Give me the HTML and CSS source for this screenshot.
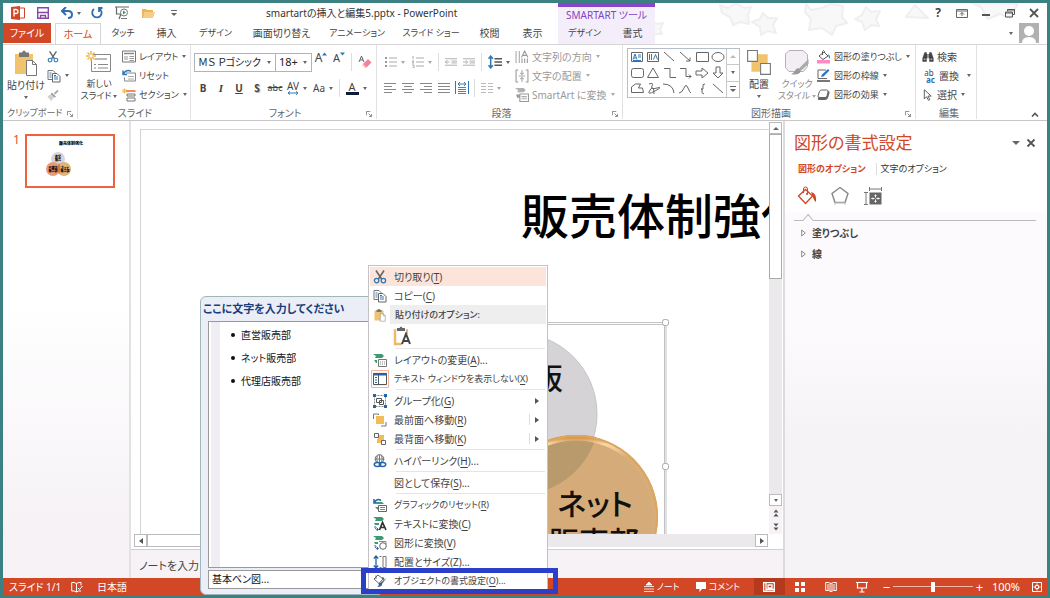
FILE: index.html
```html
<!DOCTYPE html>
<html lang="ja">
<head>
<meta charset="utf-8">
<title>smartartの挿入と編集5.pptx - PowerPoint</title>
<link rel="stylesheet" href="styles.css">
</head>
<body>
<svg class="defs" aria-hidden="true">
  <symbol id="cut" viewBox="0 0 14 14"><path d="M3 0.5 8.6 9M11 0.5 5.4 9" stroke="#666" stroke-width="1.6" fill="none"/><circle cx="3.6" cy="10.6" r="2.2" fill="none" stroke="#2f78b8" stroke-width="1.3"/><circle cx="10.4" cy="10.6" r="2.2" fill="none" stroke="#2f78b8" stroke-width="1.3"/></symbol>
  <symbol id="copy" viewBox="0 0 14 14"><path d="M1 1.5h5l2 2v7H1z" fill="#fff" stroke="#777"/><path d="M5.500 4.500h4.500l3 3v5.500H5.500z" fill="#fff" stroke="#666"/><path d="M2.500 4h2M2.500 6h2M2.500 8h2M7 8h4M7 10h4M7 6.500h2" stroke="#2f78b8"/></symbol>
  <symbol id="paste" viewBox="0 0 24 28"><path d="M1 5h18v20H1z" fill="#f0c36d"/><path d="M5 3.500h3q2-4 4 0h3V8H5z" fill="#777"/><path d="M12.500 11.500h6l4 4v11h-10z" fill="#fff" stroke="#777"/><path d="M18.500 11.500v4h4" fill="none" stroke="#777"/></symbol>
  <symbol id="brush" viewBox="0 0 14 14"><path d="m8 5 4-4 1.500 1.500-4 4z" fill="#aaa"/><path d="m5.500 4 5 5-2 1-4-4z" fill="#999"/><path d="m4 6 4 4-3 4-4.500-5z" fill="#d0d0d0"/></symbol>
  <symbol id="newslide" viewBox="0 0 26 22"><path d="M5.500 3.500h19v17h-19z" fill="#fff" stroke="#888"/><path d="M9 8h12" stroke="#bbb" stroke-width="2"/><path d="M8 13.500h2M12 13.500h10M8 17h2M12 17h10" stroke="#888"/><path d="M5 0v10M0 5h10M1.500 1.500l7 7M8.500 1.500l-7 7" stroke="#efb84c" stroke-width="1.500"/><circle cx="5" cy="5" r="1.700" fill="#fff"/></symbol>
  <symbol id="layout" viewBox="0 0 14 13"><path d="M.5.5h13v11H.5z" fill="#fff" stroke="#777"/><path d="M2 3h10" stroke="#888" stroke-width="1.500"/><path d="M2 5.500h4v4H2z" fill="#ccc"/><path d="M7.500 6H12M7.500 8H12M7.500 10H12" stroke="#999"/></symbol>
  <symbol id="reset" viewBox="0 0 14 13"><path d="M4 3.500h9.500v8H2.500V8" fill="#fff" stroke="#888"/><path d="M6 7h6M6 9.500h6" stroke="#aaa"/><path d="M1 1v4h4M1.500 4.500C3 1 6.500 0 9 2" fill="none" stroke="#2f78b8" stroke-width="1.500"/></symbol>
  <symbol id="section" viewBox="0 0 14 13"><path d="M4 2.500h9.500" stroke="#e8703a" stroke-width="1.600"/><path d="M5 5.500h8v2H5zM5 9.500h8v3H5z" fill="#fff" stroke="#777"/><path d="M2.500 0v5M0 2.500h5M.7.700l3.600 3.600M4.300.7.700 4.300" stroke="#efb84c"/></symbol>
  <symbol id="bullets" viewBox="0 0 12 12"><path d="M4 2h8M4 6h8M4 10h8" stroke="#aaa"/><path d="M0 2h2M0 6h2M0 10h2" stroke="#999" stroke-width="2"/></symbol>
  <symbol id="numbers" viewBox="0 0 12 12"><path d="M4 2h8M4 6h8M4 10h8" stroke="#aaa"/><path d="M1 0v3M0 5h2l-2 2h2M0 9h2v3H0" stroke="#aaa" fill="none"/></symbol>
  <symbol id="outdent" viewBox="0 0 13 10"><path d="M0 1.500h13M7 4h6M7 6h6M0 8.500h13M0 5h5M2.500 3 .5 5l2 2" stroke="#aaa" fill="none"/></symbol>
  <symbol id="indent" viewBox="0 0 13 10"><path d="M0 1.500h13M7 4h6M7 6h6M0 8.500h13M0 5h5M3 3l2 2-2 2" stroke="#aaa" fill="none"/></symbol>
  <symbol id="spacing" viewBox="0 0 13 13"><path d="M2.500 1v11M.5 3.500l2-2.500 2 2.500M.5 9.500l2 2.500 2-2.500" fill="none" stroke="#2f78b8" stroke-width="1.400"/><path d="M6 3.500h7M6 6.500h7M6 9.500h7" stroke="#555" stroke-width="1.200"/></symbol>
  <symbol id="al" viewBox="0 0 12 10"><path d="M0 .5h12M0 3.500h8M0 6.500h12M0 9.500h8" stroke="#888"/></symbol>
  <symbol id="ac" viewBox="0 0 12 10"><path d="M0 .5h12M2 3.500h8M0 6.500h12M2 9.500h8" stroke="#888"/></symbol>
  <symbol id="ar" viewBox="0 0 12 10"><path d="M0 .5h12M4 3.500h8M0 6.500h12M4 9.500h8" stroke="#888"/></symbol>
  <symbol id="aj" viewBox="0 0 12 10"><path d="M0 .5h12M0 3.500h12M0 6.500h12M0 9.500h12" stroke="#888"/></symbol>
  <symbol id="ad" viewBox="0 0 14 14"><path d="M.5 0v13M13.500 0v13" stroke="#2f78b8"/><path d="M3 6.500h8M3 8.500h8M3 10.500h8M3 12.500h8" stroke="#777"/><path d="M3 3h8M5 1 3 3l2 2M9 1l2 2-2 2" fill="none" stroke="#2f78b8"/></symbol>
  <symbol id="cols" viewBox="0 0 12 10"><path d="M0 .5h5M0 3.500h5M0 6.500h5M0 9.500h5M7 .5h5M7 3.500h5M7 6.500h5M7 9.500h5" stroke="#bbb"/></symbol>
  <symbol id="dir" viewBox="0 0 13 13"><path d="M1 1v11M4 1v11" stroke="#aaa"/><path d="M6 7 9 1l3 6M7 5h4M9 8v4M6.500 8v4M11.500 8v4" fill="none" stroke="#999"/></symbol>
  <symbol id="valign" viewBox="0 0 13 13"><path d="M3 1H1v11h2M10 1h2v11h-2" fill="none" stroke="#999"/><path d="M6.500 1v4M6.500 8v4M5 3.500 6.500 5 8 3.500M5 9.500 6.500 8 8 9.500M3.500 6.500h6" fill="none" stroke="#aaa"/></symbol>
  <symbol id="tosmart" viewBox="0 0 13 13"><path d="M0 0h8l2 2-2 2H2l1-2z" fill="#b0b0b0"/><path d="M1 6h4v3H2z" fill="#999"/><path d="M4.500 5.500h8v7h-8z" fill="#fff" stroke="#999"/><path d="M6 8h5M6 10h5" stroke="#aaa"/></symbol>
  <symbol id="arrange" viewBox="0 0 22 24"><path d="M10 4h9v9h-9zM4 11h8v9H4z" fill="#f0c36d"/><path d="M.5.5h9v10h-9zM12.500 12.500h9v10h-9z" fill="#fff" stroke="#777"/></symbol>
  <symbol id="quick" viewBox="0 0 24 26"><path d="M4 .5h14l4.500 4v12l-4 5H4l-3.500-4V4z" fill="#f3eef3" stroke="#b5b0b5"/><path d="M23.500 9v5l-8 7-2-2z" fill="#aaa"/><path d="M13 18l3 3c-2 4-6 4-10 3 4-1 4-5 7-6z" fill="#999"/></symbol>
  <symbol id="fill" viewBox="0 0 14 14"><path d="M0 10h13v3.500H0z" fill="#ff8ac4"/><path d="m2 6 5-4 4 4-5 3.500z" fill="#fff" stroke="#555"/><path d="M5.500 5V1.500q1-2 2 0V3" stroke="#555" fill="none"/><path d="M11 4q3 2 1.500 5-1-2-1.500-5z" fill="#2f78b8"/></symbol>
  <symbol id="outline" viewBox="0 0 14 14"><path d="M9 1H1v8.500h9" fill="none" stroke="#666"/><path d="m4 8 1-2.500L11 0l1.500 1.500-6 6z" fill="#2f78b8"/><path d="M0 12h13" stroke="#777" stroke-width="2"/></symbol>
  <symbol id="effects" viewBox="0 0 14 14"><path d="M4 3h7q2 0 1.500 2L11 10q-1 2-3 2H3q-3 0-2-2z" fill="#666"/><path d="M4.500 2h5q2 0 1.500 2L10 8q-.5 1.500-2 1.500H3Q.5 9.500 1 8l1.500-4.500Q3 2 4.500 2z" fill="#fff" stroke="#666"/></symbol>
  <symbol id="find" viewBox="0 0 14 13"><path d="M3 1h2.500v2H8.500V1H11l2.500 7v4H8.500V8h-3v4H.5V8z" fill="#444"/><path d="M7 3v6M2 9h2M10 9h2" stroke="#fff"/></symbol>
  <symbol id="cursor" viewBox="0 0 10 13"><path d="M1 .8v10l2.500-2.500 2 4 1.500-.8-2-3.800H8.500z" fill="#fff" stroke="#555"/></symbol>
  <symbol id="launch" viewBox="0 0 7 7"><path d="M.5 5V.5H5M3 3l3 3M6.500 3.500v3h-3" fill="none" stroke="#777"/></symbol>
  <symbol id="greenlay" viewBox="0 0 14 14"><path d="M0 1h9l2 2-2 2H2l1-2z" fill="#3d9a72"/><path d="M1 7h3v3H3z" fill="#3d9a72"/><path d="M5.500 6.500h8v7h-8z" fill="#fff" stroke="#777"/><path d="M7 9h5M7 11h5" stroke="#888" stroke-dasharray="1 1"/></symbol>
  <symbol id="pane" viewBox="0 0 14 14"><path d="M.5 1.500h13v11H.5z" fill="#fff" stroke="#555"/><path d="M0 2.500h14" stroke="#2464a8" stroke-width="2"/><path d="M5.500 3v10" stroke="#555"/><path d="M2 5.500h2M2 8h2M2 10.500h2" stroke="#2464a8"/></symbol>
  <symbol id="group" viewBox="0 0 14 14"><path d="M1.500 1.500h11v11h-11z" fill="none" stroke="#888" stroke-dasharray="2 1"/><path d="M3.500 4.500h5v4h-5zM6.500 6.500h4v4h-4z" fill="#fff" stroke="#555"/><path d="M0 0h3v3H0zM11 0h3v3h-3zM0 11h3v3H0zM11 11h3v3h-3z" fill="#2464a8"/></symbol>
  <symbol id="front" viewBox="0 0 14 14"><path d="M.5 6V1h5v1M13 9v4H8" fill="none" stroke="#777"/><path d="M3 3h8v8H3z" fill="#f2bd58"/></symbol>
  <symbol id="back" viewBox="0 0 14 14"><path d="M5 3h6v5H9v3H4V7h1z" fill="#f2bd58"/><path d="M1.500 1.500h4v4h-4zM8.500 8.500h4v4h-4z" fill="#fff" stroke="#666"/></symbol>
  <symbol id="link" viewBox="0 0 14 14"><circle cx="6.500" cy="5" r="4.300" fill="#fff" stroke="#666"/><path d="M2 5h9M6.500 1v8M4.500 1.500q-1.500 3 0 7M8.500 1.500q1.500 3 0 7" fill="none" stroke="#777"/><ellipse cx="4.500" cy="10.500" rx="3.200" ry="2" fill="#fff" stroke="#2464a8" stroke-width="1.500"/><ellipse cx="9.500" cy="10.500" rx="3.200" ry="2" fill="none" stroke="#2464a8" stroke-width="1.500"/></symbol>
  <symbol id="greset" viewBox="0 0 14 14"><path d="M1 1v4h4M1.500 4.500Q4 0 8 2.500" fill="none" stroke="#2464a8" stroke-width="1.500"/><path d="M3 4h6l2 2H4zM2 9h3v3z" fill="#3d9a72"/><path d="M5.500 7.500h8v6h-8z" fill="#fff" stroke="#666"/><path d="M7 9.500h5M7 11.500h5" stroke="#888"/></symbol>
  <symbol id="gtext" viewBox="0 0 14 14"><path d="M0 0h9l2 2-2 2H2l1-2zM1 6h5v2H2z" fill="#3d9a72"/><path d="M2 9q0 4 3 3.500M3.500 10.500l2 2-2 1.500" fill="none" stroke="#2464a8"/><path d="m6.500 13 3-7.500 3.500 7.500M7.500 10.500h4" fill="none" stroke="#333" stroke-width="1.700"/></symbol>
  <symbol id="gshape" viewBox="0 0 14 14"><path d="M0 0h9l2 2-2 2H2l1-2zM1 6h4v2H2z" fill="#3d9a72"/><path d="M2 9q0 4 3 3.500M3.500 10.500l2 2-2 1.500" fill="none" stroke="#2464a8"/><path d="M6 5.500h7v3" fill="none" stroke="#888"/><circle cx="10" cy="10" r="3.300" fill="#fff" stroke="#666"/></symbol>
  <symbol id="size" viewBox="0 0 14 14"><path d="M3 1v12M.8 3.500 3 1l2.200 2.500M.8 10.500 3 13l2.200-2.500" fill="none" stroke="#2464a8" stroke-width="1.300"/><path d="M6.500 1.500h2M6.500 12.500h2M10 1.500h3v11h-3z" fill="none" stroke="#777"/></symbol>
  <symbol id="format" viewBox="0 0 14 14"><path d="m1 5 4-4 5 4-4 4.500z" fill="#fff" stroke="#666"/><path d="M3 5V1.500" stroke="#666"/><path d="M9 3q3 0 2 4-1-2-2-4z" fill="#2464a8"/><path d="M13.500 4 9 10l-2-1z" fill="#666"/><path d="M9 9q1 4-5 4 2-1 2-4z" fill="#2464a8"/></symbol>
  <symbol id="tri" viewBox="0 0 5 8"><path d="M.7 1 4.300 4 .7 7z" fill="#fff" stroke="#888"/></symbol>
</svg>

<div class="window">
  <header class="top">
    <div class="top-left">
      <div class="titlebar">
        <div class="qat">
          <svg class="i14" viewBox="0 0 14 14"><path d="M5 2h8.500v10H5z" fill="#fff" stroke="#d24726"/><path d="M0 1 9 0v14L0 13z" fill="#d24726"/><path d="M3 10.500v-7h2q2 0 2 2t-2 2H3M10 5h2M10 7.500h2M10 10h2" fill="none" stroke="#fff" stroke-width="1.300"/></svg>
          <button aria-label="上書き保存"><svg class="i12" viewBox="0 0 12 12"><path d="M.7.700h10.600v10.600H.7z" fill="#fff" stroke="#8548a8" stroke-width="1.400"/><path d="M.7 5.500h10.600M3.500 11V8.500h5V11" fill="none" stroke="#8548a8" stroke-width="1.400"/></svg></button>
          <button class="wide" aria-label="元に戻す"><svg class="i12" viewBox="0 0 12 12"><path d="M5 0 1 4l4 4M1.500 4H7q4 0 4 3.500T7 11" fill="none" stroke="#2f6fae" stroke-width="2"/></svg><i class="caret"></i></button>
          <button aria-label="やり直し"><svg class="i12" viewBox="0 0 12 12"><path d="M8 1.500A4.700 4.700 0 1 1 3 2M11.500 1H8v4" fill="none" stroke="#2f6fae" stroke-width="1.800"/></svg></button>
          <button aria-label="スライドショー"><svg class="i14" viewBox="0 0 14 14"><path d="M0 1h14M1.500 1v7H6M4 13l2-5" fill="none" stroke="#666" stroke-width="1.200"/><circle cx="9" cy="6.500" r="3.500" fill="#fff" stroke="#777"/><path d="M8 4.500v4l3-2z" fill="#3d9a72"/><path d="M6 12.500h6" stroke="#777"/></svg></button>
          <button aria-label="開く"><svg class="i14" viewBox="0 0 14 12"><path d="M1 11V2h4l1 1h6v8z" fill="#eab45c"/><path d="M2 11l1-6h11l-2 6z" fill="#f5cd85"/></svg></button>
          <button aria-label="クイック アクセスのカスタマイズ"><i class="caret bar"></i></button>
        </div>
        <span class="doc">smartartの挿入と編集5.pptx - PowerPoint</span>
      </div>
      <nav class="tabs">
        <button class="file">ファイル</button>
        <button class="on">ホーム</button>
        <button class="t3">タッチ</button>
        <button class="t2">挿入</button>
        <button class="t4">デザイン</button>
        <button class="t6">画面切り替え</button>
        <button class="t7">アニメーション</button>
        <button class="t7">スライド ショー</button>
        <button class="t2">校閲</button>
        <button class="t2">表示</button>
      </nav>
    </div>
    <div class="context">
      <span>SMARTART ツール</span>
      <nav><button>デザイン</button><button>書式</button></nav>
    </div>
    <div class="top-right">
      <svg class="stars" viewBox="0 0 390 38" aria-hidden="true"><g fill="#f9f8f9" stroke="#f0eef0" stroke-width="2" stroke-linejoin="round"><path d="m64 2 8 3 8-5 8 5 7-1-3 8 1 9-9-2-7 3-3-8-8-4z"/><path d="m107 10 5 5 9 0-4 7 3 8-8-2-7 4-1-8-8-5 8-3z"/><path d="m150 1 5 6 11-2 9-4 12 2-1 11 5 6-11 3-4 9-10-7-13 2 2-11-6-7z"/><path d="m210 4 5 5 9-1-4 8 3 7-8-1-6 5-3-8-7-3 7-4z"/><path d="m-6 16 6 5 7-1-3 6 2 5-7 0-4 4-3-6z"/><path d="m250 14 9-12 8 8 5 5zM316 0l9 4 7 12 12-5 10 4 8-14z"/></g></svg>
      <div class="wincontrols">
        <button aria-label="ヘルプ" class="help">?</button>
        <button aria-label="リボンの表示オプション"><svg class="i12" viewBox="0 0 12 12"><path d="M.5 2.500h11v8H.5zM.5 4h11M6 9V5.500M4 7.500l2-2 2 2" fill="none" stroke="#666"/></svg></button>
        <button aria-label="最小化"><svg class="i10" viewBox="0 0 10 10"><path d="M1 7h8" stroke="#555" stroke-width="2"/></svg></button>
        <button aria-label="元に戻す (縮小)"><svg class="i10" viewBox="0 0 10 10"><path d="M2.500 3V1.500h7v5H8M.5 4h7v5h-7zM.5 5h7M2.500 2h7" fill="none" stroke="#555"/></svg></button>
        <button aria-label="閉じる"><svg class="i10" viewBox="0 0 10 10"><path d="m1 1 8 8M9 1 1 9" stroke="#555" stroke-width="1.800"/></svg></button>
      </div>
      <button class="account" aria-label="アカウント"><i class="caret"></i><svg viewBox="0 0 20 20"><path d="M0 0h20v20H0z" fill="#b3b0b3"/><circle cx="10" cy="8" r="5" fill="#fff"/><path d="M3 20q0-6 7-6t7 6z" fill="#fff"/></svg></button>
    </div>
  </header>

  <section class="ribbon" aria-label="リボン">
    <div class="group g-clip">
      <div class="body">
        <button class="big"><svg class="paste"><use href="#paste"/></svg>貼り付け<i class="caret"></i></button>
        <div class="col">
          <button aria-label="切り取り"><svg class="i12"><use href="#cut"/></svg></button>
          <button aria-label="コピー"><svg class="i14"><use href="#copy"/></svg><i class="caret"></i></button>
          <button aria-label="書式のコピー"><svg class="i12"><use href="#brush"/></svg></button>
        </div>
      </div>
      <div class="name">クリップボード<svg class="launch"><use href="#launch"/></svg></div>
    </div>
    <div class="group g-slide">
      <div class="body">
        <button class="big"><svg class="ns"><use href="#newslide"/></svg>新しい<span>スライド<i class="caret"></i></span></button>
        <div class="col">
          <button><svg class="i14"><use href="#layout"/></svg>レイアウト<i class="caret"></i></button>
          <button><svg class="i14"><use href="#reset"/></svg>リセット</button>
          <button><svg class="i14"><use href="#section"/></svg>セクション<i class="caret"></i></button>
        </div>
      </div>
      <div class="name">スライド</div>
    </div>
    <div class="group g-font">
      <div class="rows">
        <div class="row">
          <span class="combo face"><select aria-label="フォント"><option>ＭＳ Ｐゴシック ス</option></select><i class="caret"></i></span><span class="combo pt"><select aria-label="フォント サイズ"><option>18+</option></select><i class="caret"></i></span>
          <button class="w18 grow" aria-label="フォント サイズの拡大">A<svg viewBox="0 0 5 4"><path d="M0 3.500 2.500.5 5 3.500z" fill="#2f78b8"/></svg></button>
          <button class="w18 shrink" aria-label="フォント サイズの縮小">A<svg viewBox="0 0 5 4"><path d="M0 .5 2.500 3.500 5 .5z" fill="#2f78b8"/></svg></button>
          <i class="sep"></i>
          <button class="w20" aria-label="書式のクリア"><svg class="i14" viewBox="0 0 14 14"><path d="m1 7 2.500-6L6 7M2 5h3" fill="none" stroke="#666"/><path d="m5 9 5-5 3.500 3.500-5 5z" fill="#ef8496"/><path d="m5 9 3.500 3.500-1 1L4 10z" fill="#f7bcc5"/></svg></button>
        </div>
        <div class="row">
          <button class="w18"><b>B</b></button><button class="w18 ital">I</button><button class="w18"><u><b>U</b></u></button><button class="w18 shad"><b>S</b></button><button class="w18 strike">abc</button><button class="w24 av"><span>AV<svg viewBox="0 0 12 4"><path d="M1 2h10M3 .3 1 2l2 1.700M9 .3 11 2 9 3.700" fill="none" stroke="#2f78b8"/></svg></span><i class="caret"></i></button><button class="w24">Aa<i class="caret"></i></button><i class="sep"></i><button class="w24 color"><span>A</span><i class="caret"></i></button>
        </div>
      </div>
      <div class="name">フォント<svg class="launch"><use href="#launch"/></svg></div>
    </div>
    <div class="group g-para">
      <div class="body">
        <div class="rows">
          <div class="row">
            <button class="w28" aria-label="箇条書き"><svg class="i12"><use href="#bullets"/></svg><i class="caret dim"></i></button><button class="w28" aria-label="段落番号"><svg class="i12"><use href="#numbers"/></svg><i class="caret dim"></i></button><i class="sep"></i><button class="w18" aria-label="インデントを減らす"><svg class="i12"><use href="#outdent"/></svg></button><button class="w18" aria-label="インデントを増やす"><svg class="i12"><use href="#indent"/></svg></button><i class="sep"></i><button class="w28" aria-label="行間"><svg class="i14"><use href="#spacing"/></svg><i class="caret"></i></button>
          </div>
          <div class="row">
            <button class="w18" aria-label="左揃え"><svg class="i12x"><use href="#al"/></svg></button><button class="w18" aria-label="中央揃え"><svg class="i12x"><use href="#ac"/></svg></button><button class="w18" aria-label="右揃え"><svg class="i12x"><use href="#ar"/></svg></button><button class="w18" aria-label="両端揃え"><svg class="i12x"><use href="#aj"/></svg></button><button class="w18" aria-label="均等割り付け"><svg class="i14"><use href="#ad"/></svg></button><i class="sep"></i><button class="w24" aria-label="段組み"><svg class="i12x"><use href="#cols"/></svg><i class="caret dim"></i></button>
          </div>
        </div>
        <div class="col off">
          <button><svg class="i14"><use href="#dir"/></svg>文字列の方向<i class="caret dim"></i></button>
          <button><svg class="i14"><use href="#valign"/></svg>文字の配置<i class="caret dim"></i></button>
          <button><svg class="i14"><use href="#tosmart"/></svg>SmartArt に変換<i class="caret dim"></i></button>
        </div>
      </div>
      <div class="name">段落<svg class="launch"><use href="#launch"/></svg></div>
    </div>
    <div class="group g-draw">
      <div class="body">
        <div class="gallery">
          <svg viewBox="0 0 96 48" role="img" aria-label="図形"><g fill="none" stroke="#666"><path d="M2.500 3.500h11v9h-11z"/><path d="M4 10.500 6 5l2 5.500M5 9h2M9 6h3M9 8h3M4 11.500h8" stroke="#2f78b8"/><path d="M18.500 3.500h11v9h-11z"/><path d="M20.500 5v6M22.500 5v6M24.500 10.500l2-5 2 5" stroke="#2f78b8"/><path d="m35 3 10 9M51 3l10 9M61 8.500V12h-4"/><path d="M67.500 3.500h12v9h-12z"/><ellipse cx="89" cy="8" rx="6" ry="4.500"/><rect x="2.500" y="19.500" width="12" height="9" rx="2"/><path d="m24 19 5.500 9.500h-11zM35 19.500h6v9h6M51 19.500h6v8h5M60 25.500l2 2-2 2M67 22h6v-3l6 5-6 5v-3h-6zM87 18h4v6h3l-5 5-5-5h3z"/><path d="M2.500 43.500V38l4-3h5l-2 4h4l1 4.500zM20 35q5-2 3 2t5 2-2 3-5-1 4 4M34 35q10 0 11 9M50 44q3 0 5-5t4 0 3 5M76 35q-3 0-2 3t-2 2q2 0 1 2t2 3M84 35l10 9"/></g></svg>
          <div class="spin"><button aria-label="上へ"><i class="caret up dim"></i></button><button aria-label="下へ"><i class="caret"></i></button><button aria-label="その他"><i class="caret bar"></i></button></div>
        </div>
        <button class="big"><svg class="ar"><use href="#arrange"/></svg>配置<i class="caret"></i></button>
        <button class="big qs"><svg class="ar"><use href="#quick"/></svg>クイック<span>スタイル<i class="caret dim"></i></span></button>
        <div class="col">
          <button><svg class="i14"><use href="#fill"/></svg>図形の塗りつぶし<i class="caret"></i></button>
          <button><svg class="i14"><use href="#outline"/></svg>図形の枠線<i class="caret"></i></button>
          <button><svg class="i14"><use href="#effects"/></svg>図形の効果<i class="caret"></i></button>
        </div>
      </div>
      <div class="name">図形描画<svg class="launch"><use href="#launch"/></svg></div>
    </div>
    <div class="group g-edit">
      <div class="col">
        <button><svg class="i12"><use href="#find"/></svg>検索</button>
        <button><span class="swap"><span>ab</span><b>ac</b></span>置換<i class="caret far"></i></button>
        <button><svg class="i12"><use href="#cursor"/></svg>選択<i class="caret"></i></button>
      </div>
      <div class="name">編集</div>
    </div>
    <button class="collapse" aria-label="リボンを折りたたむ"><svg viewBox="0 0 8 5"><path d="m1 4.500 3-3 3 3" fill="none" stroke="#555" stroke-width="1.600"/></svg></button>
  </section>

  <main class="work">
    <aside class="thumbs">
      <span>1</span>
      <div class="thumb"><svg viewBox="0 0 86 50"><text x="32" y="9" font-size="4" font-weight="900">販売体制強化</text><circle cx="31" cy="23" r="7" fill="#d6d6da"/><circle cx="26" cy="33" r="7" fill="#e79a7c"/><circle cx="37" cy="33" r="7" fill="#dfb37a"/><path d="M32 27q-3 6 0 11 3-5 0-11" fill="#d9762c"/><g font-size="3" font-weight="900" text-anchor="middle"><text x="31" y="22">直営</text><text x="31" y="25">販売</text><text x="26" y="33">代理店</text><text x="26" y="36">販売部</text><text x="38" y="33">ネット</text><text x="38" y="36">販売部</text></g></svg></div>
    </aside>
    <section class="editor">
      <div class="stage">
        <div class="slide">
          <h1>販売体制強化</h1>
          <svg class="art" viewBox="0 0 627 404" role="img" aria-label="基本ベン図">
            <defs><linearGradient id="rim" x1="0" y1="0" x2="0" y2="1"><stop offset="0" stop-color="#d9974a"/><stop offset=".04" stop-color="#fbd9a4"/><stop offset=".12" stop-color="#d9ad78"/><stop offset="1" stop-color="#d5ac79"/></linearGradient></defs>
            <circle cx="375" cy="284" r="81" fill="#d5d3d6" stroke="#c5c3c7"/>
            <circle cx="435" cy="387" r="82" fill="#d5ac79"/>
            <path d="M435 305A82 82 0 0 1 455 307 81 81 0 0 1 375 365L353 380A82 82 0 0 1 435 305z" fill="#b99a6c"/>
            <circle cx="435" cy="387" r="79" fill="none" stroke="url(#rim)" stroke-width="5"/>
            <circle cx="435" cy="387" r="81" fill="none" stroke="#dba662" stroke-width="2"/>
            <g fill="#111" font-size="30" font-weight="500" text-anchor="middle"><text x="407" y="259">販</text><text x="454" y="385">ネット</text><text x="453" y="423">販売部</text></g>
            <path d="M226 192.500h299V404M226 194.500h297.500V404" fill="none" stroke="#c3c1c3"/>
            <g fill="#fff" stroke="#aaa"><rect x="521.500" y="189.500" width="6" height="6" rx="2"/><rect x="521.500" y="333.500" width="6" height="6" rx="2"/></g>
          </svg>
        </div>
        <div class="vscroll">
          <button aria-label="上へ"><i class="caret up"></i></button>
          <div class="knob"></div><div class="track"></div>
          <button aria-label="下へ"><i class="caret"></i></button>
          <button class="flat" aria-label="前のスライド"><svg viewBox="0 0 8 8"><path d="M1.500 3.500 4 .5l2.500 3zM1.500 7.500 4 4.500l2.500 3z" fill="#555"/></svg></button>
          <button class="flat" aria-label="次のスライド"><svg viewBox="0 0 8 8"><path d="M1.500.5 4 3.500 6.500.5zM1.500 4.500 4 7.500l2.500-3z" fill="#555"/></svg></button>
        </div>
      </div>
      <div class="hscroll"><button aria-label="左へ"><i class="caret left"></i></button><div class="knob"></div><div class="track"></div><button aria-label="右へ"><i class="caret right"></i></button></div>
      <div class="notes"><input aria-label="ノート" value="ノートを入力"></div>
    </section>
    <aside class="format">
      <div class="fhead"><h2>図形の書式設定</h2><button aria-label="オプション"><i class="caret big-c"></i></button><button aria-label="閉じる"><svg class="i10" viewBox="0 0 10 10"><path d="m1.500 1.500 7 7M8.500 1.500l-7 7" stroke="#555" stroke-width="1.800"/></svg></button></div>
      <div class="ftabs"><button class="on">図形のオプション</button><button>文字のオプション</button></div>
      <div class="ficons">
        <button aria-label="塗りつぶしと線"><svg viewBox="0 0 20 20"><path d="m1.500 10 7-6.500 7 6.500-7 7.500z" fill="#fff" stroke="#d24726" stroke-width="1.300"/><path d="M6.500 7V3q0-2 2-2t2 2v5" fill="none" stroke="#d24726"/><circle cx="10" cy="8" r="1" fill="#d24726"/><path d="M14 6q6 1 5 10-2-1-3.500-6z" fill="#d24726"/></svg></button>
        <button aria-label="効果"><svg viewBox="0 0 20 20"><path d="m10 1.500 8 6-3 9H5l-3-9z" fill="#fff" stroke="#888" stroke-width="1.400"/><path d="M5 19v-2h10v2" fill="none" stroke="#ccc"/></svg></button>
        <button aria-label="サイズとプロパティ"><svg viewBox="0 0 20 20"><path d="M6.500 6.500h12v12h-12z" fill="#666"/><path d="M6 3h13M6.500 1v4M18.500 1v4M3 7v11M1 6.500h4M1 18.500h4" stroke="#777" fill="none"/><path d="M12.500 8.500v3M12.500 13.500v3M8.500 12.500h3M13.500 12.500h3M11.500 10l1-1 1 1M11.500 15l1 1 1-1M10 11.500l-1 1 1 1M15 11.500l1 1-1 1" stroke="#fff" fill="none"/></svg></button>
      </div>
      <svg class="rule" viewBox="0 0 240 8" preserveAspectRatio="xMinYMid slice"><path d="M0 7.500h9l5-6 5 6h221" fill="none" stroke="#bbb"/></svg>
      <button class="sect"><svg><use href="#tri"/></svg>塗りつぶし</button>
      <button class="sect"><svg><use href="#tri"/></svg>線</button>
    </aside>
  </main>

  <footer class="status">
    <span>スライド 1/1</span>
    <svg class="i12" viewBox="0 0 12 12"><path d="M5.500 2.500V11M5.500 2.500Q3 1 .7 1.500v8.500q2.500-.5 4.800 1 2-1.500 4.500-1M5.500 2.500Q8 1 10 1.500v3" fill="none" stroke="#fff"/><path d="m7 7 1.500 1.500L11.500 5" fill="none" stroke="#fff"/></svg>
    <span class="lang">日本語</span>
    <i class="grow-x"></i>
    <button class="note"><svg class="i10" viewBox="0 0 10 10"><path d="M5 0 8 3H2zM0 4.500h10M0 7h10M0 9.500h10" fill="#fff" stroke="#fff" stroke-width=".8"/></svg>ノート</button>
    <button class="cmt"><svg class="i10" viewBox="0 0 10 10"><path d="M0 0h10v7H6L3.500 10V7H0z" fill="#fff"/></svg>コメント</button>
    <button class="view on" aria-label="標準"><svg class="i12" viewBox="0 0 12 12"><path d="M.7 1.700h10.600v8.600H.7zM3 2v8M5 4h4v3H5zM3 8.500h8" fill="none" stroke="#fff" stroke-width="1.300"/></svg></button>
    <button class="view" aria-label="スライド一覧"><svg class="i12" viewBox="0 0 12 12"><path d="M1 1h4v4H1zM7 1h4v4H7zM1 7h4v4H1zM7 7h4v4H7z" fill="#fff"/></svg></button>
    <button class="view" aria-label="閲覧表示"><svg class="i12" viewBox="0 0 12 12"><path d="M6 2.500V11M6 2.500Q3 1 .7 1.500v8q3-.5 5.300 1 2.500-1.500 5.300-1v-8Q8.500 1 6 2.500M2 4h3M2 6h3M2 8h3M7 4h3M7 6h3M7 8h3" fill="none" stroke="#fff"/></svg></button>
    <button class="view" aria-label="スライドショー"><svg class="i12" viewBox="0 0 12 12"><path d="M0 1.500h12M1.500 2v5h9V2M6 7v4M3.500 11h5" fill="none" stroke="#fff" stroke-width="1.200"/></svg></button>
    <span class="zoom"><button aria-label="縮小">−</button><input type="range" min="10" max="190" value="100" aria-label="ズーム"><button aria-label="拡大">+</button></span>
    <button class="pct">100%</button>
    <button class="fit" aria-label="ウィンドウに合わせる"><svg class="i10" viewBox="0 0 10 10"><path d="M.5.500h9v9h-9zM5 1.500v2M5 6.500v2M1.500 5h2M6.500 5h2M3.500 3.500h3v3h-3z" fill="none" stroke="#fff"/></svg></button>
  </footer>

  <section class="textpane">
    <h3>ここに文字を入力してください</h3>
    <div class="list"><ul><li>直営販売部</li><li>ネット販売部</li><li>代理店販売部</li></ul></div>
    <div class="kind">基本ベン図...</div>
  </section>

  <div class="menu" role="menu">
    <button role="menuitem" class="hot"><svg><use href="#cut"/></svg><span>切り取り(<u>T</u>)</span></button>
    <button role="menuitem"><svg><use href="#copy"/></svg><span>コピー(<u>C</u>)</span></button>
    <div class="mhead"><svg><use href="#paste"/></svg><b>貼り付けのオプション:</b></div>
    <button role="menuitem" class="pasteopt" aria-label="貼り付け"><svg viewBox="0 0 18 20"><path d="M2 3v15h7" fill="none" stroke="#f0b964" stroke-width="2.400"/><path d="M14 3v5" stroke="#f0b964" stroke-width="2"/><path d="M4 2h2.500q1.500-3 3 0H12v3H4z" fill="#666"/><path d="m9 18 4-10 4 10M10.500 15h5" fill="none" stroke="#444" stroke-width="2"/></svg></button>
    <hr>
    <button role="menuitem"><svg><use href="#greenlay"/></svg><span>レイアウトの変更(<u>A</u>)...</span></button>
    <button role="menuitem" class="checked long"><svg><use href="#pane"/></svg><span>テキスト ウィンドウを表示しない(<u>X</u>)</span></button>
    <hr>
    <button role="menuitem"><svg><use href="#group"/></svg><span>グループ化(<u>G</u>)</span><i class="caret right"></i></button>
    <button role="menuitem" class="split"><svg><use href="#front"/></svg><span>最前面へ移動(<u>R</u>)</span><i class="caret right"></i></button>
    <button role="menuitem" class="split"><svg><use href="#back"/></svg><span>最背面へ移動(<u>K</u>)</span><i class="caret right"></i></button>
    <hr>
    <button role="menuitem"><svg><use href="#link"/></svg><span>ハイパーリンク(<u>H</u>)...</span></button>
    <hr>
    <button role="menuitem"><svg></svg><span>図として保存(<u>S</u>)...</span></button>
    <hr>
    <button role="menuitem" class="long"><svg><use href="#greset"/></svg><span>グラフィックのリセット(<u>R</u>)</span></button>
    <button role="menuitem"><svg><use href="#gtext"/></svg><span>テキストに変換(<u>C</u>)</span></button>
    <button role="menuitem"><svg><use href="#gshape"/></svg><span>図形に変換(<u>V</u>)</span></button>
    <button role="menuitem"><svg><use href="#size"/></svg><span>配置とサイズ(<u>Z</u>)...</span></button>
    <button role="menuitem" class="marked long"><svg><use href="#format"/></svg><span>オブジェクトの書式設定(<u>O</u>)...</span></button>
  </div>
</div>
</body>
</html>
```
FILE: styles.css
```css
* { box-sizing: border-box; }
html, body { height: 100%; margin: 0; }
body {
  font: 10px/12px "Noto Sans", "Noto Sans CJK JP", sans-serif;
  font-feature-settings: "palt";
  color: #444;
}
button, input, select { font: inherit; font-feature-settings: inherit; color: inherit; }
button {
  display: flex; align-items: center; justify-content: center;
  padding: 0; border: 0; background: none; white-space: nowrap;
}
svg { flex: none; display: block; }
.defs { position: absolute; width: 0; height: 0; }
.i10 { width: 10px; height: 10px; }
.i12 { width: 12px; height: 12px; }
.i12x { width: 12px; height: 10px; }
.i14 { width: 14px; height: 14px; }

.caret {
  flex: none; width: 0; height: 0; margin-left: 4px;
  border: solid transparent; border-width: 3px 2px 0; border-top-color: #666;
}
.caret.dim { border-top-color: #aaa; }
.caret.up { border-width: 0 3px 3px; border-color: transparent; border-bottom-color: #666; }
.caret.up.dim { border-bottom-color: #bbb; }
.caret.left { border-width: 3px 4px 3px 0; border-color: transparent; border-right-color: #555; }
.caret.right { border-width: 3px 0 3px 4px; border-color: transparent; border-left-color: #555; }
.caret.bar { width: 6px; height: 6px; border: 0; border-top: 1px solid #666; position: relative; }
.caret.bar::after { content: ""; position: absolute; top: 2px; left: 0; border: solid transparent; border-width: 3px 3px 0; border-top-color: #666; }
.caret.big-c { border-width: 4px 4px 0; }
.sep { flex: none; width: 1px; height: 18px; margin: 0 3px; background: #ddd; }

.window {
  position: relative; height: 100%; min-height: 480px; overflow: hidden;
  display: flex; flex-direction: column;
  border: 3px solid #3c8182; background: #fff;
}

/* title bar and tabs */
.top { display: flex; height: 42px; flex: none; border-bottom: 1px solid #d6d6d6; }
.top-left { width: 555px; display: flex; flex-direction: column; }
.titlebar { display: flex; align-items: center; height: 21px; }
.qat { display: flex; align-items: center; gap: 12px; width: 263px; padding-left: 8px; }
.qat .wide { margin-right: -2px; }
.doc { line-height: 16px; white-space: nowrap; color: #333; }
.tabs { display: flex; height: 21px; }
.tabs button { height: 20px; padding: 0; }
.tabs .file { width: 48px; background: #d24726; color: #fff; }
.tabs .on { width: 46px; height: 21px; margin-left: 4px; background: #fff; border: 1px solid #d6d6d6; border-bottom: 0; color: #d24726; }
.tabs .t2 { width: 43px; }
.tabs .t3 { width: 44px; font-size: 9px; }
.tabs .t4 { width: 55px; font-size: 9px; }
.tabs .t6 { width: 77px; }
.tabs .t7 { width: 74px; font-size: 9px; }
.context { width: 97px; background: #f4eefb; border-top: 4px solid #8a46c8; }
.context span { display: block; padding-left: 8px; line-height: 16px; color: #8542c4; white-space: nowrap; }
.context nav { display: flex; height: 20px; }
.context nav button:first-child { width: 53px; font-size: 9px; }
.context nav button:last-child { width: 43px; }
.top-right { position: relative; flex: 1; display: flex; flex-direction: column; align-items: flex-end; }
.stars { position: absolute; top: 0; left: 0; width: 100%; height: 38px; }
.wincontrols { position: relative; display: flex; gap: 14px; height: 20px; padding-right: 8px; }
.wincontrols button { width: 10px; }
.wincontrols .help { font-size: 12px; font-weight: 700; }
.account { position: relative; gap: 6px; padding-right: 8px; }
.account svg { width: 20px; height: 20px; }

/* ribbon */
.ribbon { display: flex; height: 76px; flex: none; border-bottom: 1px solid #c8c6c8; }
.group { display: flex; flex-direction: column; flex: none; padding: 2px 0 0 4px; border-right: 1px solid #e4e0e4; margin-bottom: 1px; }
.body { display: flex; }
.body, .g-edit .col, .g-font .rows { height: 60px; flex: none; }
.name { position: relative; height: 12px; text-align: center; color: #666; white-space: nowrap; }
.launch { position: absolute; right: 4px; top: 4px; width: 6px; height: 6px; }
.g-clip { width: 75px; }
.g-clip .name { text-align: left; font-size: 9px; }
.g-slide { width: 113px; padding-left: 2px; }
.g-font { width: 186px; padding-left: 3px; }
.g-para { width: 246px; }
.g-draw { width: 293px; }
.g-edit { width: 61px; padding-left: 6px; }
.big { flex: none; flex-direction: column; justify-content: flex-start; width: 38px; }
.big > svg { margin: 2px 0; }
.big > .caret { margin: 5px 0 0; }
.big span { display: flex; align-items: center; }
.big span .caret { margin-left: 2px; }
.big .paste { width: 24px; height: 28px; }
.big .ns { width: 26px; height: 22px; margin: 4px 0 5px; }
.big .ar { width: 24px; height: 26px; margin: 3px 0 2px; }
.g-slide .big, .qs { font-size: 9px; }
.qs { color: #888; }
.col { display: flex; flex-direction: column; font-size: 9px; }
.col button { height: 19px; justify-content: flex-start; gap: 3px; }
.col .caret { margin-left: 1px; }
.g-clip .col { padding-left: 2px; }
.g-slide .col { padding-left: 4px; }
.g-edit .col { font-size: 10px; }
.g-edit .caret.far { margin-left: 5px; }
.swap { display: flex; flex-direction: column; width: 14px; font-size: 8px; line-height: 7px; }
.swap b { padding-left: 3px; color: #2f6fae; }
.off { color: #999; padding-left: 3px; font-size: 10px; }
.rows { display: flex; flex-direction: column; gap: 4px; padding-top: 4px; }
.row { display: flex; align-items: center; height: 22px; }
.row button { height: 20px; }
.w18 { width: 18px; } .w20 { width: 20px; } .w24 { width: 26px; } .w28 { width: 27px; }
.combo { position: relative; display: flex; align-items: center; height: 19px; border: 1px solid #b5b2b5; }
.combo + .combo { border-left: 0; }
.combo select { width: 100%; height: 100%; padding: 0 12px 0 3px; border: 0; background: none; appearance: none; color: #222; }
.combo .caret { position: absolute; right: 4px; }
.face { width: 82px; }
.pt { width: 36px; font-size: 11px; }
.grow, .shrink { font-size: 12px; align-items: flex-start; }
.shrink { font-size: 11px; }
.grow svg, .shrink svg { width: 5px; height: 4px; }
.ital { font-family: "Liberation Serif", serif; font-style: italic; font-weight: 700; font-size: 11px; }
.shad { text-shadow: 1px 1px #bbb; }
.strike { text-decoration: line-through; font-size: 9px; }
.av span { line-height: 10px; }
.av svg { width: 12px; height: 4px; }
.color span { width: 13px; font-size: 11px; line-height: 11px; border-bottom: 3px solid #0b1d3a; }
.gallery { display: flex; flex: none; height: 50px; margin: 1px 0 0; border: 1px solid #b9bfc9; }
.gallery > svg { width: 98px; height: 48px; }
.spin { display: flex; flex-direction: column; width: 13px; border-left: 1px solid #c9c9c9; }
.spin button { flex: 1; }
.spin button + button { border-top: 1px solid #c9c9c9; }
.spin .caret { margin: 0; }
.g-draw .col { padding-left: 1px; }
.collapse { margin: auto 8px 3px auto; }
.collapse svg { width: 8px; height: 5px; }

/* work area */
.work { flex: 1; display: grid; grid-template-columns: 128px minmax(0, 1fr) 264px; min-height: 0; }
.thumbs { display: flex; align-items: flex-start; gap: 5px; padding: 13px 0 0 10px; border-right: 2px solid #e3e1e3; background: linear-gradient(#fff 40%, #f6f2f6 90%); color: #e0532f; font-size: 12px; }
.thumbs span { width: 7px; }
.thumb { border: 2px solid #f0623c; background: #fff; width: 90px; color: #000; }
.thumb svg { width: 86px; height: 50px; }
.editor { display: flex; flex-direction: column; min-width: 0; }
.stage { flex: 1; display: flex; min-height: 0; padding: 1px 1px 0 9px; }
.slide { position: relative; flex: 1; margin-top: 7px; overflow: hidden; border: solid #d4d4d4; border-width: 1px 0 0 1px; }
.slide h1 { margin: 0; padding: 50px 0 0 380px; font-weight: 500; font-size: 48px; line-height: 72px; color: #000; white-space: nowrap; font-feature-settings: normal; }
.art { position: absolute; top: 0; left: 0; width: 627px; height: 404px; }
.vscroll { display: flex; flex-direction: column; width: 13px; background: #f6f2f6; }
.vscroll button { height: 12px; border: 1px solid #bbb; background: #fff; }
.vscroll .flat { height: 14px; border: 0; background: none; }
.vscroll .flat svg { width: 8px; height: 8px; }
.vscroll .caret, .hscroll .caret { margin: 0; }
.vscroll .knob { height: 145px; border: 1px solid #aaa; background: #fff; }
.track { flex: 1; background: #ebe9eb; }
.hscroll { display: flex; height: 13px; margin: 0 15px 0 3px; }
.hscroll button { width: 13px; border: 1px solid #bbb; background: #fff; }
.hscroll .knob { width: 260px; border: 1px solid #bbb; background: #fff; }
.notes { height: 29px; margin-top: 2px; padding: 8px 8px 0; border-top: 1px solid #d0ced0; background: #f6f2f6; }
.notes input { width: 100%; height: 14px; padding: 0; border: 0; background: none; font-size: 11px; }

/* format pane */
.format { border-left: 2px solid #dcdadc; background: linear-gradient(#fff 90px, #fdfafe 92px, #fdfafe 210px, #f6f3f7 320px); padding: 11px 11px 0 9px; }
.fhead { display: flex; align-items: center; gap: 6px; }
.fhead h2 { flex: 1; margin: 0; font-weight: 400; font-size: 17px; line-height: 22px; color: #d24726; }
.ftabs { display: flex; padding: 9px 0 0 4px; color: #333; font-size: 9px; }
.ftabs .on { font-weight: 700; color: #d24726; padding-right: 10px; margin-right: 4px; border-right: 1px solid #ddd; }
.ficons { display: flex; gap: 13px; padding: 11px 0 0 3px; }
.ficons svg { width: 20px; height: 20px; }
.rule { width: 100%; height: 8px; margin-top: 7px; }
.sect { gap: 6px; padding: 6px 0 3px 7px; font-weight: 700; }
.sect svg { width: 5px; height: 8px; }

/* status bar */
.status { display: flex; align-items: center; height: 17px; flex: none; background: #d24726; color: #fff; }
.status > span:first-child { width: 68px; padding-left: 6px; white-space: nowrap; }
.status .lang { padding-left: 14px; }
.grow-x { flex: 1; }
.status .note, .status .cmt { gap: 3px; font-size: 9px; }
.status .cmt { margin: 0 14px 0 16px; }
.view { width: 31px; height: 17px; }
.view.on { background: #b5391c; }
.zoom { display: flex; align-items: center; gap: 2px; margin-left: 4px; font-size: 13px; }
.zoom button { width: 9px; }
.zoom input { width: 80px; height: 12px; margin: 0; appearance: none; background: linear-gradient(#f0b8a8, #f0b8a8) center / 100% 1px no-repeat; }
.zoom input::-webkit-slider-thumb { appearance: none; width: 4px; height: 10px; background: #fff; }
.pct { margin-left: 8px; font-size: 11px; }
.fit { margin: 0 5px 0 12px; }

/* SmartArt text pane */
.textpane {
  position: absolute; left: 197px; top: 293px; bottom: 0; width: 180px;
  display: flex; flex-direction: column; padding: 2px 0 5px 2px;
  border: 1px solid #9fb6bf; border-radius: 6px 0 0 6px; background: #eceef7; color: #111;
}
.textpane h3 { margin: 0; font-size: 11px; line-height: 20px; font-weight: 700; color: #173f7d; white-space: nowrap; }
.list { flex: 1; margin: 2px 0 0 5px; border: 1px solid #999; background: linear-gradient(#f1eef3, #f1eef3) 2px 0 / 9px 100% no-repeat #fff; }
.list ul { margin: 0; padding: 1px 0 0 22px; list-style: none; }
.list li { display: flex; align-items: center; gap: 6px; height: 23px; }
.list li::before { content: ""; width: 4px; height: 4px; border-radius: 50%; background: #111; }
.kind { margin: 2px 0 0 5px; padding-left: 3px; height: 19px; line-height: 16px; border: 1px solid #999; background: #fff; }

/* context menu */
.menu {
  position: absolute; left: 365px; top: 262px; width: 180px; padding: 1px;
  border: 1px solid #c4c2c6; background: #fff;
}
.menu button, .mhead { display: flex; width: 100%; height: 19px; align-items: center; justify-content: flex-start; }
.menu button { position: relative; padding: 0 7px 0 3px; gap: 7px; }
.menu button svg, .mhead svg { width: 14px; height: 14px; }
.menu span { flex: 1; text-align: left; }
.menu u { text-underline-offset: 2px; }
.menu .hot { background: #fde4db; }
.menu .long { font-size: 9px; }
.mhead { padding-left: 3px; gap: 3px; }
.mhead b { flex: 1; height: 19px; padding-left: 5px; line-height: 19px; font-weight: 500; font-size: 9px; background: #efeeef; }
.menu .pasteopt { height: 23px; padding-left: 23px; }
.menu .pasteopt svg { width: 18px; height: 20px; }
.menu hr { height: 1px; margin: 1px 1px 1px 26px; border: 0; background: #e2e4e8; }
.menu .checked svg { outline: 1px solid #f2b49d; outline-offset: 1px; background: #fdece5; }
.menu .split::after { content: ""; position: absolute; right: 16px; top: 4px; height: 11px; width: 1px; background: #ddd; }
.menu .marked::before { content: ""; position: absolute; left: -9px; right: -12px; top: -3px; bottom: -4px; border: 5px solid #2b3fc8; }
```
